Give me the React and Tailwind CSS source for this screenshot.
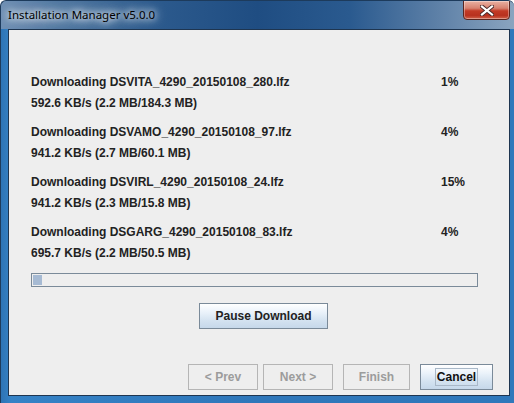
import React from "react";

const rows = [
  ["Downloading DSVITA_4290_20150108_280.lfz", "592.6 KB/s (2.2 MB/184.3 MB)", "1%"],
  ["Downloading DSVAMO_4290_20150108_97.lfz", "941.2 KB/s (2.7 MB/60.1 MB)", "4%"],
  ["Downloading DSVIRL_4290_20150108_24.lfz", "941.2 KB/s (2.3 MB/15.8 MB)", "15%"],
  ["Downloading DSGARG_4290_20150108_83.lfz", "695.7 KB/s (2.2 MB/50.5 MB)", "4%"],
];

function DisabledBtn({ label, w }) {
  return (
    <div
      className={`${w} shrink-0 h-[26px] border border-[#b5b5b5] bg-[#eeeeee] flex items-center justify-center text-[12px] font-bold text-[#9c9c9c]`}
    >
      {label}
    </div>
  );
}

export default function App() {
  return (
    <div
      className="w-[514px] h-[403px] flex flex-col overflow-hidden rounded-t-[6px] border-l border-t border-[#1d3b5c] bg-[linear-gradient(90deg,#6f90b4_0%,#4f76a0_12%,#2c5a8d_30%,#1f4d82_50%,#2a5a8f_68%,#5d80a7_85%,#8aa4bf_100%)]"
      style={{ fontFamily: '"Liberation Sans", Arial, sans-serif' }}
    >
      {/* title bar */}
      <div className="h-[28px] flex items-start justify-between pl-[7px] pr-[4px]">
        <div
          className="mt-[6px] text-[11.5px] text-black leading-[16px] [text-shadow:0_0_6px_#ffffff,0_0_10px_#ffffff,0_0_14px_#dfe8f1]"
          style={{ fontFamily: '"Noto Sans", "Open Sans", sans-serif' }}
        >
          Installation Manager v5.0.0
        </div>
        <div className="w-[47px] h-[20px] -mt-px rounded-b-[4px] border border-[#5a2620] bg-[linear-gradient(180deg,#e9b1a3_0%,#d78270_40%,#c23a26_55%,#b8311f_80%,#d0634c_100%)] flex items-center justify-center shadow-[inset_0_0_0_1px_rgba(255,255,255,0.35)]">
          <svg width="14" height="11" viewBox="0 0 14 11">
            <path d="M2 1.5 L12 9.5 M12 1.5 L2 9.5" stroke="#4a2a2a" strokeWidth="4" strokeLinecap="square" />
            <path d="M2 1.5 L12 9.5 M12 1.5 L2 9.5" stroke="#ffffff" strokeWidth="2.2" strokeLinecap="square" />
          </svg>
        </div>
      </div>

      {/* frame body */}
      <div className="flex-1 flex flex-col pl-[7px] pr-[4px] pb-[7px] bg-[linear-gradient(90deg,#2e74b5_0%,#3582c6_2%,#2f77ba_50%,#2f78bb_100%)]">
        <div className="flex-1 border border-[#1e3550] bg-[#eeeeee] flex flex-col pl-[22px] pt-[41px] text-[#222222]">
          {rows.map((r, i) => (
            <div key={i} className="flex flex-col mb-[8px]">
              <div className="flex h-[21px] items-center text-[12px] font-bold">
                <span className="w-[410px]">{r[0]}</span>
                <span>{r[2]}</span>
              </div>
              <div className="h-[21px] flex items-center text-[12px] font-bold">{r[1]}</div>
            </div>
          ))}
          <div className="mt-[2px] w-[447px] h-[14px] border border-[#7a8a99] bg-[#eeeeee] p-px flex">
            <div className="w-[9px] h-full bg-[#a6bad3]" />
          </div>
          <div className="mt-[16px] flex justify-start pl-[168px]">
            <div className="w-[129px] h-[26px] border border-[#7a8a99] bg-[linear-gradient(180deg,#ffffff_0%,#eaf2fa_35%,#d3e2f0_70%,#c6d8ea_100%)] flex items-center justify-center text-[12px] font-bold text-[#222222]">
              Pause Download
            </div>
          </div>
          <div className="mt-[35px] flex pl-[157px]">
            <DisabledBtn label="< Prev" w="w-[70px]" />
            <div className="w-[5px] shrink-0" />
            <DisabledBtn label="Next >" w="w-[70px]" />
            <div className="w-[10px] shrink-0" />
            <DisabledBtn label="Finish" w="w-[67px]" />
            <div className="w-[10px] shrink-0" />
            <div className="w-[73px] shrink-0 h-[26px] border border-[#7a8a99] bg-[linear-gradient(180deg,#ffffff_0%,#eaf2fa_35%,#d3e2f0_70%,#c6d8ea_100%)] flex items-center justify-center">
              <span className="border border-[#a9b8c8] px-[1px] leading-[16px] text-[12px] font-bold text-[#111111]">
                Cancel
              </span>
            </div>
          </div>
        </div>
      </div>
    </div>
  );
}
